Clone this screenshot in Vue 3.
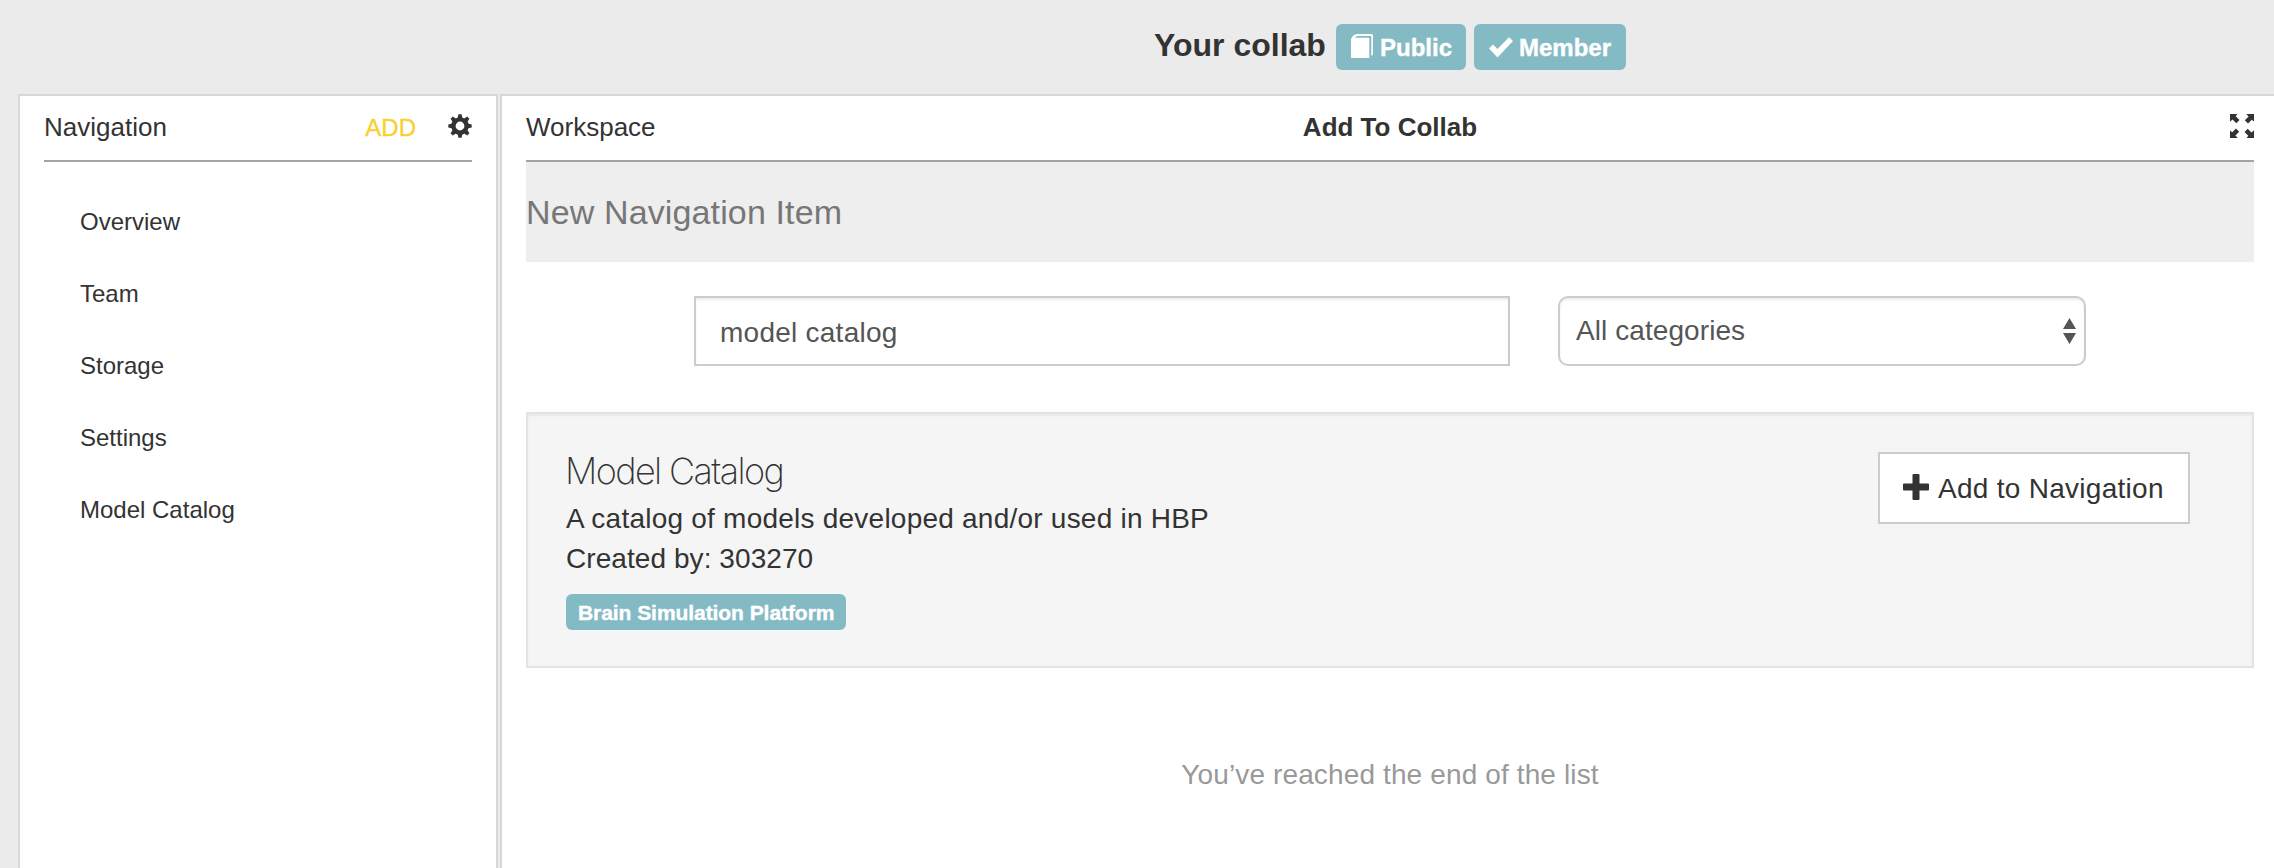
<script setup>
const navItems = ['Overview', 'Team', 'Storage', 'Settings', 'Model Catalog']
</script>

<template>
  <div class="page">
    <header class="top">
      <h1 class="title">Your collab</h1>
      <span class="badge public">
        <svg width="22" height="24" viewBox="0 0 22 24" fill="#fff"><path d="M0 5Q.5 3 2.500 1.500 4 0 6 0H20.500Q22 0 22 1.500V20.500L20.300 22V3Q20.300 1.900 19.300 1.900H6.500Q5 1.900 4 3.800H17.500Q18.300 3.800 18.300 4.600V24H0Z" /></svg>
        <span>Public</span>
      </span>
      <span class="badge member">
        <svg width="24" height="21" viewBox="0 0 24 21" fill="#fff"><path d="M0 11.500 4 7.500 8.500 12 20 .3 24 4 8.500 20.500Z" /></svg>
        <span>Member</span>
      </span>
    </header>
    <div class="panels">
      <aside class="side">
        <div class="bar">
          <span>Navigation</span>
          <span class="add">ADD</span>
          <svg class="gear" width="24" height="24" viewBox="-12 -12 24 24">
            <g fill="#333"><path v-for="a in 8" :key="a" d="M-2.600-7-1.600-11.700H1.600L2.600-7Z" :transform="`rotate(${a * 45})`" /></g>
            <circle r="6.600" fill="none" stroke="#333" stroke-width="4.400" />
          </svg>
        </div>
        <ul class="nav"><li v-for="n in navItems" :key="n">{{ n }}</li></ul>
      </aside>
      <main class="work">
        <div class="bar workbar">
          <span>Workspace</span>
          <b>Add To Collab</b>
          <svg class="expand" width="24" height="24" viewBox="0 0 24 24" fill="#333"><path v-for="a in 4" :key="a" d="M0 0H7.500L5.700 2.200 9.500 6 6.300 9.200 2.500 5.400 0 7.800Z" :transform="`rotate(${a * 90} 12 12)`" /></svg>
        </div>
        <h2 class="band">New Navigation Item</h2>
        <div class="filters">
          <div class="search">model catalog</div>
          <div class="select">
            <span>All categories</span>
            <svg width="13" height="26" viewBox="0 0 13 26" fill="#555"><path d="M6.500 0 13 11H0ZM0 15H13L6.500 26Z" /></svg>
          </div>
        </div>
        <section class="card">
          <div>
            <h3 class="name">Model Catalog</h3>
            <p class="desc">A catalog of models developed and/or used in HBP</p>
            <p class="by">Created by: 303270</p>
            <span class="tag">Brain Simulation Platform</span>
          </div>
          <button class="btn">
            <svg width="26" height="26" viewBox="0 0 26 26" fill="#333"><path d="M10.500 0H15.500Q16.500 0 16.500 1V9.500H25Q26 9.500 26 10.500V15.500Q26 16.500 25 16.500H16.500V25Q16.500 26 15.500 26H10.500Q9.500 26 9.500 25V16.500H1Q0 16.500 0 15.500V10.500Q0 9.500 1 9.500H9.500V1Q9.500 0 10.500 0Z" /></svg>
            <span>Add to Navigation</span>
          </button>
        </section>
        <p class="end">You’ve reached the end of the list</p>
      </main>
    </div>
  </div>
</template>

<style>
body { background: #ebebeb; }
</style>

<style scoped>
.page { height: 868px; overflow: hidden; display: flex; flex-direction: column; background: #ebebeb; color: #333; font: 28px/40px "Liberation Sans", Arial, sans-serif; }
.page * { box-sizing: border-box; }
h1, h2, h3, p, ul { margin: 0; padding: 0; font-weight: 400; }
svg { display: block; flex: none; }
.top { height: 94px; padding-left: 1154px; display: flex; }
.title { width: 182px; padding-top: 25px; font-size: 32px; font-weight: 700; line-height: 40px; white-space: nowrap; }
.badge { height: 46px; margin-top: 24px; border-radius: 6px; background: #84bac4; color: #fff; font-size: 24px; font-weight: 700; line-height: 47px; display: flex; white-space: nowrap; -webkit-text-stroke: .4px #fff; }
.public { width: 130px; padding-left: 15px; gap: 7px; }
.public svg { margin-top: 10px; }
.member { width: 152px; margin-left: 8px; padding-left: 15px; gap: 6px; }
.member svg { margin-top: 13px; }
.panels { flex: 1; display: flex; gap: 2px; padding-left: 18px; min-height: 0; }
.side, .work { background: #fff; border-top: 2px solid #d8d8d8; border-left: 2px solid #d8d8d8; }
.side { width: 480px; border-right: 2px solid #d8d8d8; padding: 0 24px; }
.work { flex: 1; padding: 0 20px 0 24px; }
.bar { height: 66px; border-bottom: 2px solid #a3a3a3; display: flex; font-size: 26px; line-height: 62px; }
.add { margin-left: auto; margin-right: 32px; color: #f8d030; font-size: 24px; line-height: 63px; -webkit-text-stroke: .3px #f8d030; }
.gear { margin-top: 18px; }
.nav { list-style: none; padding: 24px 0 0 36px; }
.nav li { height: 72px; font-size: 24px; line-height: 72px; }
.workbar { display: grid; grid-template-columns: 1fr auto 1fr; }
.expand { justify-self: end; margin-top: 18px; }
.band { height: 100px; background: #eee; color: #777; font-size: 34px; line-height: 100px; letter-spacing: .13px; }
.filters { display: flex; gap: 48px; padding: 34px 0 0 168px; color: #555; }
.search { width: 816px; height: 70px; border: 2px solid #ccc; padding-left: 24px; line-height: 69px; letter-spacing: .25px; box-shadow: inset 0 2px 2px rgba(0, 0, 0, .075); }
.select { width: 528px; height: 70px; border: 2px solid #ccc; border-radius: 10px; padding: 0 8px 0 16px; line-height: 66px; letter-spacing: .08px; box-shadow: inset 0 2px 2px rgba(0, 0, 0, .075); display: flex; justify-content: space-between; }
.select svg { margin-top: 20px; }
.card { height: 256px; margin-top: 46px; border: 2px solid #e3e3e3; background: #f5f5f5; box-shadow: inset 0 2px 2px rgba(0, 0, 0, .05); padding: 37px 62px 0 38px; display: flex; justify-content: space-between; align-items: flex-start; }
.name { font: 200 36px/40px Inter, sans-serif; letter-spacing: -1.6px; margin: 0 0 8px -1px; }
.desc { letter-spacing: .23px; }
.by { letter-spacing: .07px; }
.tag { display: block; width: 280px; height: 36px; margin-top: 15px; padding-left: 12px; border-radius: 6px; background: #84bac4; color: #fff; font-size: 21px; font-weight: 700; line-height: 37px; letter-spacing: -.06px; white-space: nowrap; -webkit-text-stroke: .4px #fff; }
.btn { width: 312px; height: 72px; margin-top: 1px; border: 2px solid #ccc; background: #fff; color: #333; font: inherit; padding: 0 0 0 23px; display: flex; gap: 9px; line-height: 69px; letter-spacing: .28px; white-space: nowrap; }
.btn svg { margin-top: 20px; }
.end { margin-top: 87px; text-align: center; color: #999; letter-spacing: .13px; }
</style>
